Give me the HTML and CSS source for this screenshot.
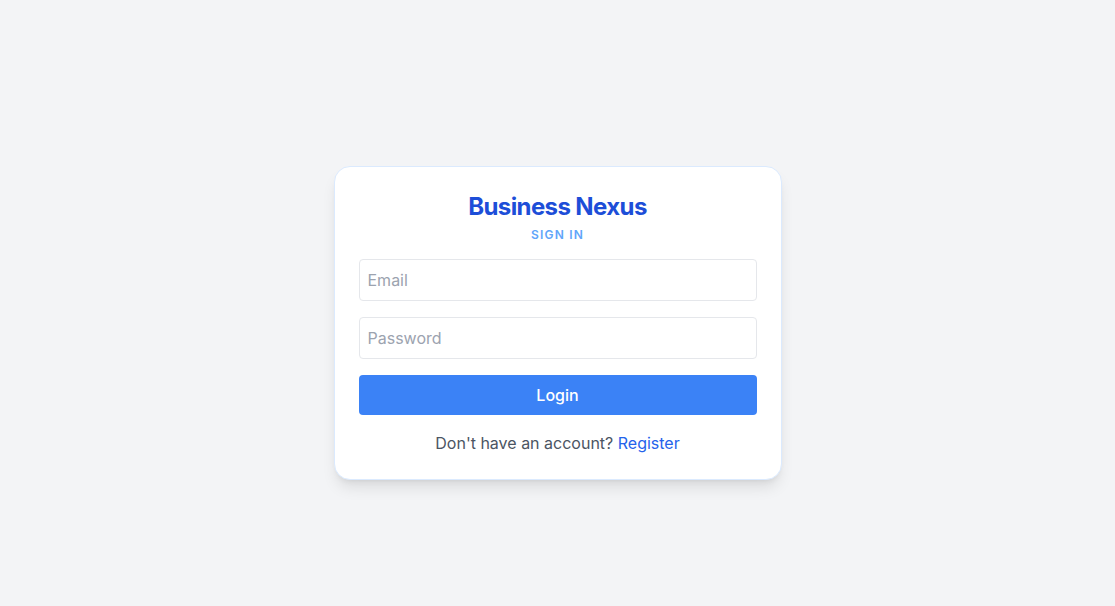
FILE: index.html
```html
<!DOCTYPE html>
<html lang="en">
<head>
<meta charset="utf-8">
<title>Business Nexus - Sign In</title>
<link rel="stylesheet" href="styles.css">
</head>
<body>
<main class="page">
  <div class="card">
    <div class="header">
      <h1 class="title">Business Nexus</h1>
      <p class="subtitle">Sign in</p>
    </div>
    <form class="form">
      <input class="field" type="email" placeholder="Email">
      <input class="field" type="password" placeholder="Password">
      <button class="btn" type="button">Login</button>
    </form>
    <p class="footer">Don't have an account? <a class="link" href="#">Register</a></p>
  </div>
</main>
</body>
</html>
```
FILE: styles.css
```css
* { box-sizing: border-box; }
html, body { margin: 0; padding: 0; }
body {
  background: #f3f4f6;
  font-family: Inter, "Noto Sans", "Liberation Sans", sans-serif;
  color: #111827;
}
.page {
  min-height: 606px;
  padding-top: 39px;
  display: flex;
  align-items: center;
  justify-content: center;
}
.card {
  width: 448px;
  background: #ffffff;
  border: 1px solid #dbeafe;
  border-radius: 16px;
  padding: 24px;
  box-shadow: 0 10px 15px -3px rgba(0,0,0,0.1), 0 4px 6px -4px rgba(0,0,0,0.1);
}
.header {
  text-align: center;
  margin-bottom: 16px;
}
.title {
  margin: 0;
  font-size: 24px;
  line-height: 32px;
  font-weight: 700;
  color: #1d4ed8;
  letter-spacing: -0.025em;
}
.subtitle {
  margin: 4px 0 0;
  font-size: 12px;
  line-height: 16px;
  font-weight: 600;
  text-transform: uppercase;
  letter-spacing: 0.1em;
  color: #60a5fa;
}
.form {
  display: flex;
  flex-direction: column;
  gap: 16px;
}
.field {
  display: block;
  width: 100%;
  height: 42px;
  padding: 8px;
  border: 1px solid #e5e7eb;
  border-radius: 4px;
  font-family: inherit;
  font-size: 16px;
  line-height: 24px;
  color: #111827;
  background: #fff;
  outline: none;
}
.field::placeholder { color: #9ca3af; }
.btn {
  display: block;
  width: 100%;
  height: 40px;
  border: none;
  border-radius: 4px;
  background: #3b82f6;
  color: #ffffff;
  font-family: inherit;
  font-size: 16px;
  font-weight: 500;
  cursor: pointer;
}
.footer {
  margin: 16px 0 0;
  text-align: center;
  font-size: 16px;
  line-height: 24px;
  color: #4b5563;
}
.link {
  color: #2563eb;
  text-decoration: none;
}
```
